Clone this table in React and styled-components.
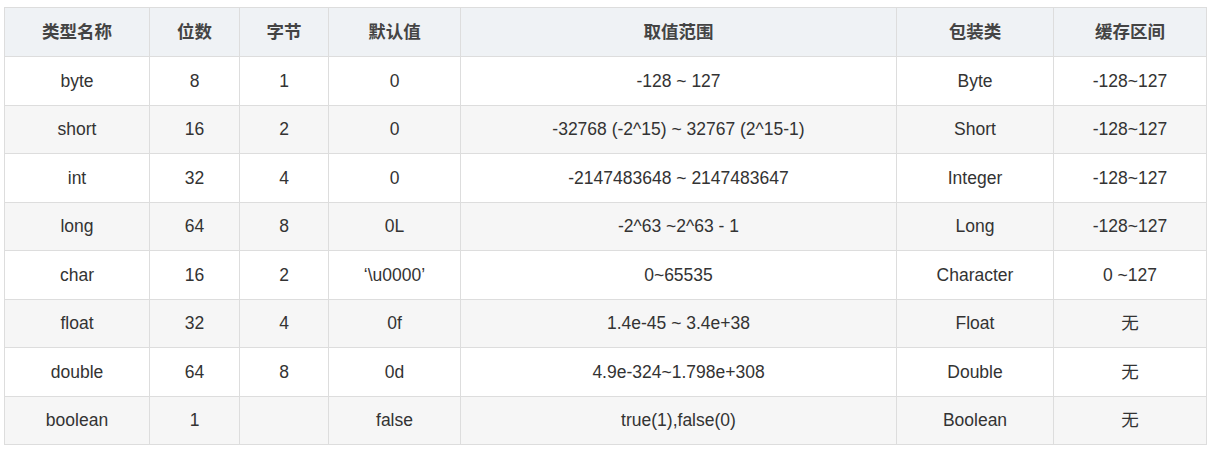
import React from 'react'
import styled, { createGlobalStyle } from 'styled-components'

const GlobalStyle = createGlobalStyle`
  html, body {
    margin: 0;
    padding: 0;
    background: #ffffff;
  }
`

const Wrapper = styled.div`
  padding: 7px 6px 0 4px;
  font-family: 'Liberation Sans', Arial, 'Noto Sans CJK SC', sans-serif;
  color: #333333;
`

const Table = styled.table`
  width: 1202px;
  table-layout: fixed;
  border-collapse: collapse;
  font-size: 17.5px;
  line-height: 20px;
`

const HeadCell = styled.th`
  height: 48px;
  padding: 0;
  border: 1px solid #dddddd;
  background: #eff2f5;
  font-weight: bold;
  color: #444444;
  text-align: center;
  vertical-align: middle;
`

const Row = styled.tr`
  height: 48.5px;
  background: ${props => (props.striped ? '#f6f6f6' : '#ffffff')};
`

const Cell = styled.td`
  padding: 0;
  border: 1px solid #dddddd;
  text-align: center;
  vertical-align: middle;
`

const columns = [
  { title: '类型名称', width: 145 },
  { title: '位数', width: 90 },
  { title: '字节', width: 89 },
  { title: '默认值', width: 132 },
  { title: '取值范围', width: 436 },
  { title: '包装类', width: 157 },
  { title: '缓存区间', width: 153 },
]

const rows = [
  ['byte', '8', '1', '0', '-128 ~ 127', 'Byte', '-128~127'],
  ['short', '16', '2', '0', '-32768 (-2^15) ~ 32767 (2^15-1)', 'Short', '-128~127'],
  ['int', '32', '4', '0', '-2147483648 ~ 2147483647', 'Integer', '-128~127'],
  ['long', '64', '8', '0L', '-2^63 ~2^63 - 1', 'Long', '-128~127'],
  ['char', '16', '2', '‘\\u0000’', '0~65535', 'Character', '0 ~127'],
  ['float', '32', '4', '0f', '1.4e-45 ~ 3.4e+38', 'Float', '无'],
  ['double', '64', '8', '0d', '4.9e-324~1.798e+308', 'Double', '无'],
  ['boolean', '1', '', 'false', 'true(1),false(0)', 'Boolean', '无'],
]

export default function App() {
  return (
    <Wrapper>
      <GlobalStyle />
      <Table>
        <colgroup>
          {columns.map(c => (
            <col key={c.title} style={{ width: c.width }} />
          ))}
        </colgroup>
        <thead>
          <tr>
            {columns.map(c => (
              <HeadCell key={c.title}>{c.title}</HeadCell>
            ))}
          </tr>
        </thead>
        <tbody>
          {rows.map((r, i) => (
            <Row key={r[0]} striped={i % 2 === 1}>
              {r.map((v, j) => (
                <Cell key={j}>{v}</Cell>
              ))}
            </Row>
          ))}
        </tbody>
      </Table>
    </Wrapper>
  )
}
